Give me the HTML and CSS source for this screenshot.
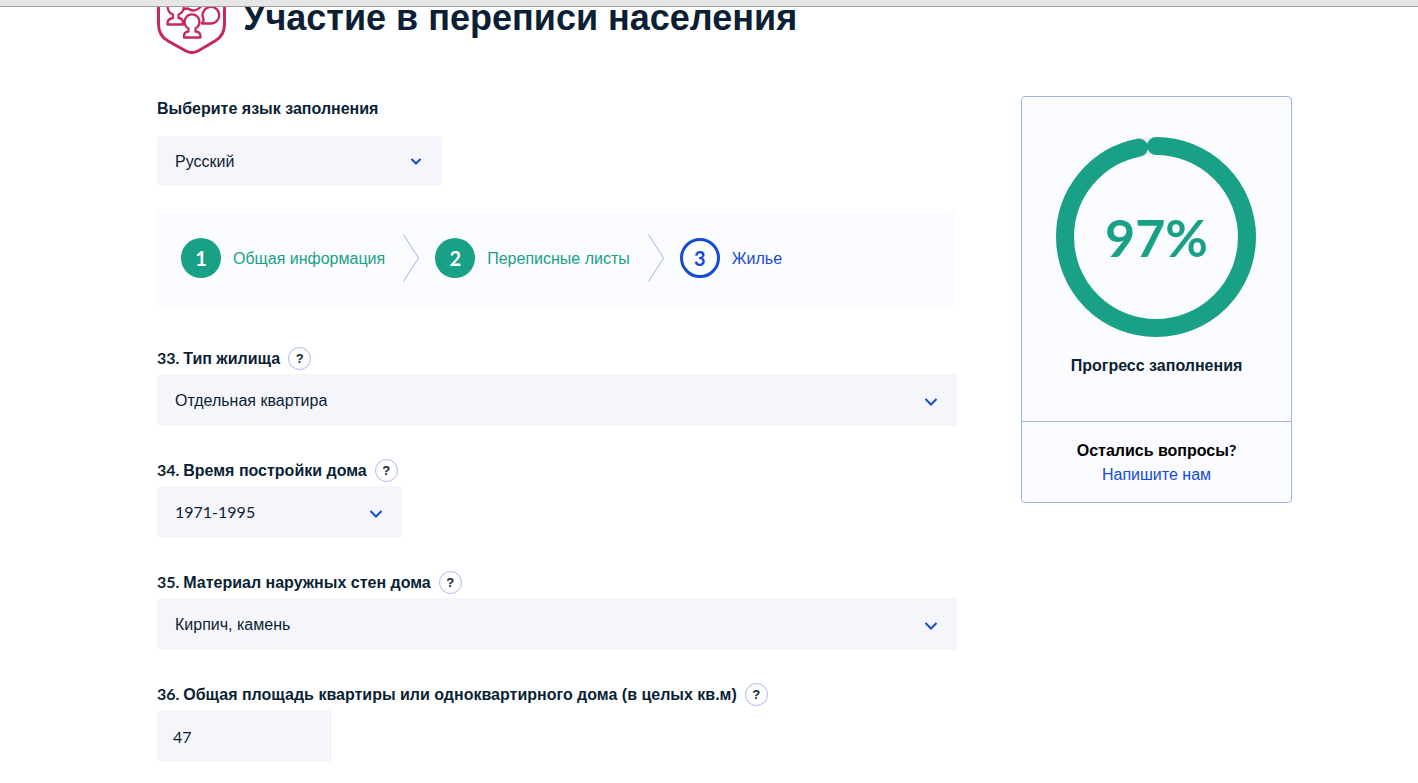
FILE: index.html
```html
<!DOCTYPE html>
<html lang="ru">
<head>
<meta charset="utf-8">
<title>Участие в переписи населения</title>
<link rel="stylesheet" href="styles.css">
</head>
<body>
<div class="topbar"></div>
<header class="hero">
  <svg class="hero-logo" viewBox="0 0 70 84" fill="none" stroke="#c8275a" stroke-width="3" stroke-linecap="round" stroke-linejoin="round" aria-hidden="true">
    <path d="M1.500 34V54C1.500 62 4 67 11 71L29 81Q35 84 41 81L58 71C65 67 67.500 62 67.500 54V34"/>
    <g stroke-width="2.300">
      <path d="M24.500 32A7.500 7.500 0 0 1 21.500 44.500V48Q26 48.500 26 53V54.500H10.500V53Q10.500 49 16 48V44.500A7.500 7.500 0 0 1 13 32"/>
      <path d="M28 39L31 38.500C36 42.500 43 40 45 34"/>
      <path d="M45 53.500H54A8.300 8.300 0 1 0 46.500 49Q47 51 45 53.500Z"/>
      <path d="M31.500 58.500A7.500 7.500 0 1 1 38.500 58.500V61.500Q43.500 62 43.500 66V67.500H27V66Q27 62 31.500 61.500Z"/>
    </g>
  </svg>
  <h1 class="hero-title">Участие в переписи населения</h1>
</header>
<div class="layout">
  <main class="form">
    <label class="language-label" for="language">Выберите язык заполнения</label>
    <div class="field field-language">
      <select class="control" id="language"><option>Русский</option></select>
      <svg class="arrow" viewBox="0 0 14 14" aria-hidden="true"><path d="M2.500 5L7 9.500L11.500 5"/></svg>
    </div>
    <ol class="steps">
      <li class="step"><span class="step-number">1</span><span class="step-name">Общая информация</span></li>
      <li class="step-separator" aria-hidden="true"><svg viewBox="0 0 16 48"><path d="M0.500 0.500L15.500 24L0.500 47.500"/></svg></li>
      <li class="step"><span class="step-number">2</span><span class="step-name">Переписные листы</span></li>
      <li class="step-separator" aria-hidden="true"><svg viewBox="0 0 16 48"><path d="M0.500 0.500L15.500 24L0.500 47.500"/></svg></li>
      <li class="step step-current" aria-current="step"><span class="step-number">3</span><span class="step-name">Жилье</span></li>
    </ol>
    <div class="question">
      <div class="question-head"><label for="q33"><span class="number">33. </span>Тип жилища</label><button class="help" type="button">?</button></div>
      <div class="field">
        <select class="control" id="q33"><option>Отдельная квартира</option></select>
        <svg class="arrow arrow-large" viewBox="0 0 14 14" aria-hidden="true"><path d="M1.500 5L7 10.500L12.500 5"/></svg>
      </div>
    </div>
    <div class="question">
      <div class="question-head"><label for="q34"><span class="number">34. </span>Время постройки дома</label><button class="help" type="button">?</button></div>
      <div class="field field-medium">
        <select class="control control-numeric" id="q34"><option>1971-1995</option></select>
        <svg class="arrow arrow-large" viewBox="0 0 14 14" aria-hidden="true"><path d="M1.500 5L7 10.500L12.500 5"/></svg>
      </div>
    </div>
    <div class="question">
      <div class="question-head"><label for="q35"><span class="number">35. </span>Материал наружных стен дома</label><button class="help" type="button">?</button></div>
      <div class="field">
        <select class="control" id="q35"><option>Кирпич, камень</option></select>
        <svg class="arrow arrow-large" viewBox="0 0 14 14" aria-hidden="true"><path d="M1.500 5L7 10.500L12.500 5"/></svg>
      </div>
    </div>
    <div class="question">
      <div class="question-head"><label for="q36"><span class="number">36. </span>Общая площадь квартиры или одноквартирного дома (в целых кв.м)</label><button class="help" type="button">?</button></div>
      <div class="field field-small">
        <input class="control control-numeric" id="q36" type="text" inputmode="numeric" value="47">
      </div>
    </div>
  </main>
  <aside class="card">
    <section class="progress">
      <div class="ring">
        <svg class="ring-chart" viewBox="0 0 200 200" fill="none" stroke-width="18" aria-hidden="true">
          <circle cx="100" cy="100" r="91" stroke="#ebedf6"/>
          <circle cx="100" cy="100" r="91" stroke="#18a186" stroke-linecap="round" pathLength="100" stroke-dasharray="97 100" transform="rotate(-90 100 100)"/>
        </svg>
        <span class="ring-value">97%</span>
      </div>
      <p class="progress-label">Прогресс заполнения</p>
    </section>
    <section class="contact">
      <p class="contact-title">Остались вопросы<span class="number">?</span></p>
      <a class="contact-link" href="#">Напишите нам</a>
    </section>
  </aside>
</div>
</body>
</html>
```
FILE: styles.css
```css
* { box-sizing: border-box; }

body {
  margin: 0;
  background: #fff;
  color: #0b1f35;
  font: 16px/24px "Liberation Sans", Arial, sans-serif;
}

p { margin: 0; }

.topbar {
  height: 7px;
  background: #e6e6e6;
  border-bottom: 1px solid #a0a0a0;
}

.hero {
  display: flex;
  align-items: flex-end;
  gap: 16px;
  height: 47px;
  padding: 0 126px 0 157px;
  overflow: hidden;
}

.hero-logo { flex: none; width: 70px; height: 84px; }

.hero-title {
  margin: 0;
  padding-bottom: 16px;
  font-size: 36px;
  line-height: 40px;
  white-space: nowrap;
}

.layout {
  display: flex;
  justify-content: space-between;
  align-items: flex-start;
  gap: 64px;
  padding: 42px 126px 21px 157px;
}

.form { flex: 1; max-width: 800px; }

.language-label {
  display: block;
  margin-bottom: 14px;
  font-weight: 700;
  line-height: 26px;
}

.field { position: relative; height: 52px; }
.field-language { height: 50px; max-width: 285px; }
.field-medium { max-width: 245px; }
.field-small { max-width: 175px; }

.control {
  display: block;
  width: 100%;
  height: 100%;
  margin: 0;
  padding: 2px 18px 0;
  border: 0;
  border-radius: 4px;
  background: #f5f6fb;
  color: #0b1f35;
  font: inherit;
  appearance: none;
}

.number, .control-numeric { font-family: Lato, sans-serif; }

.control-numeric { padding: 0 18px; }
.field-small .control { padding: 0 16px; }

.arrow {
  position: absolute;
  top: 18px;
  right: 19px;
  width: 14px;
  height: 14px;
  fill: none;
  stroke: #134bd6;
  stroke-width: 2;
  pointer-events: none;
}

.arrow-large { top: 20px; }

.steps {
  display: flex;
  align-items: center;
  height: 96px;
  margin: 24px 0 41px;
  padding: 0 24px;
  border-radius: 4px;
  background: #fbfcff;
  list-style: none;
}

.step {
  display: flex;
  align-items: center;
  gap: 12px;
  color: #18a186;
  white-space: nowrap;
}

.step-name { padding-top: 2px; }

.step-number {
  display: flex;
  align-items: center;
  justify-content: center;
  width: 40px;
  height: 40px;
  border-radius: 50%;
  background: #18a186;
  color: #fff;
  font-family: Lato, sans-serif;
  font-size: 20px;
  font-weight: 700;
}

.step-current { color: #134bd6; }

.step-current .step-number {
  border: 3px solid #134bd6;
  background: #fff;
  color: #134bd6;
}

.step-separator { height: 48px; margin: 0 16px 0 18px; }

.step-separator svg {
  display: block;
  width: 16px;
  height: 48px;
  fill: none;
  stroke: #a6b4dc;
}

.question { margin-bottom: 33px; }
.question:last-child { margin-bottom: 0; }

.question-head {
  display: flex;
  align-items: center;
  gap: 8px;
  height: 23px;
  margin-bottom: 4px;
  font-weight: 700;
}

.help {
  width: 23px;
  height: 23px;
  padding: 0;
  border: 1px solid #a9baea;
  border-radius: 50%;
  background: #fff;
  color: #0b1f35;
  font: 700 13px/20px "Liberation Sans", Arial, sans-serif;
}

.card {
  flex: none;
  width: 271px;
  border: 1px solid #9db4e6;
  border-radius: 4px;
  background: #fbfcff;
  text-align: center;
}

.progress {
  padding: 40px 34px 43px;
  border-bottom: 1px solid #9db4e6;
}

.ring {
  display: grid;
  align-items: center;
  margin-bottom: 17px;
}

.ring-chart, .ring-value { grid-area: 1 / 1; }
.ring-chart { width: 200px; height: 200px; }

.ring-value {
  color: #18a186;
  font-family: Lato, sans-serif;
  font-size: 52px;
  font-weight: 700;
  line-height: 56px;
}

.progress-label { font-weight: 700; }

.contact { padding: 16px 16px 15px; }
.contact-title { color: #000; font-weight: 700; }
.contact-link { color: #134bd6; text-decoration: none; }
```
